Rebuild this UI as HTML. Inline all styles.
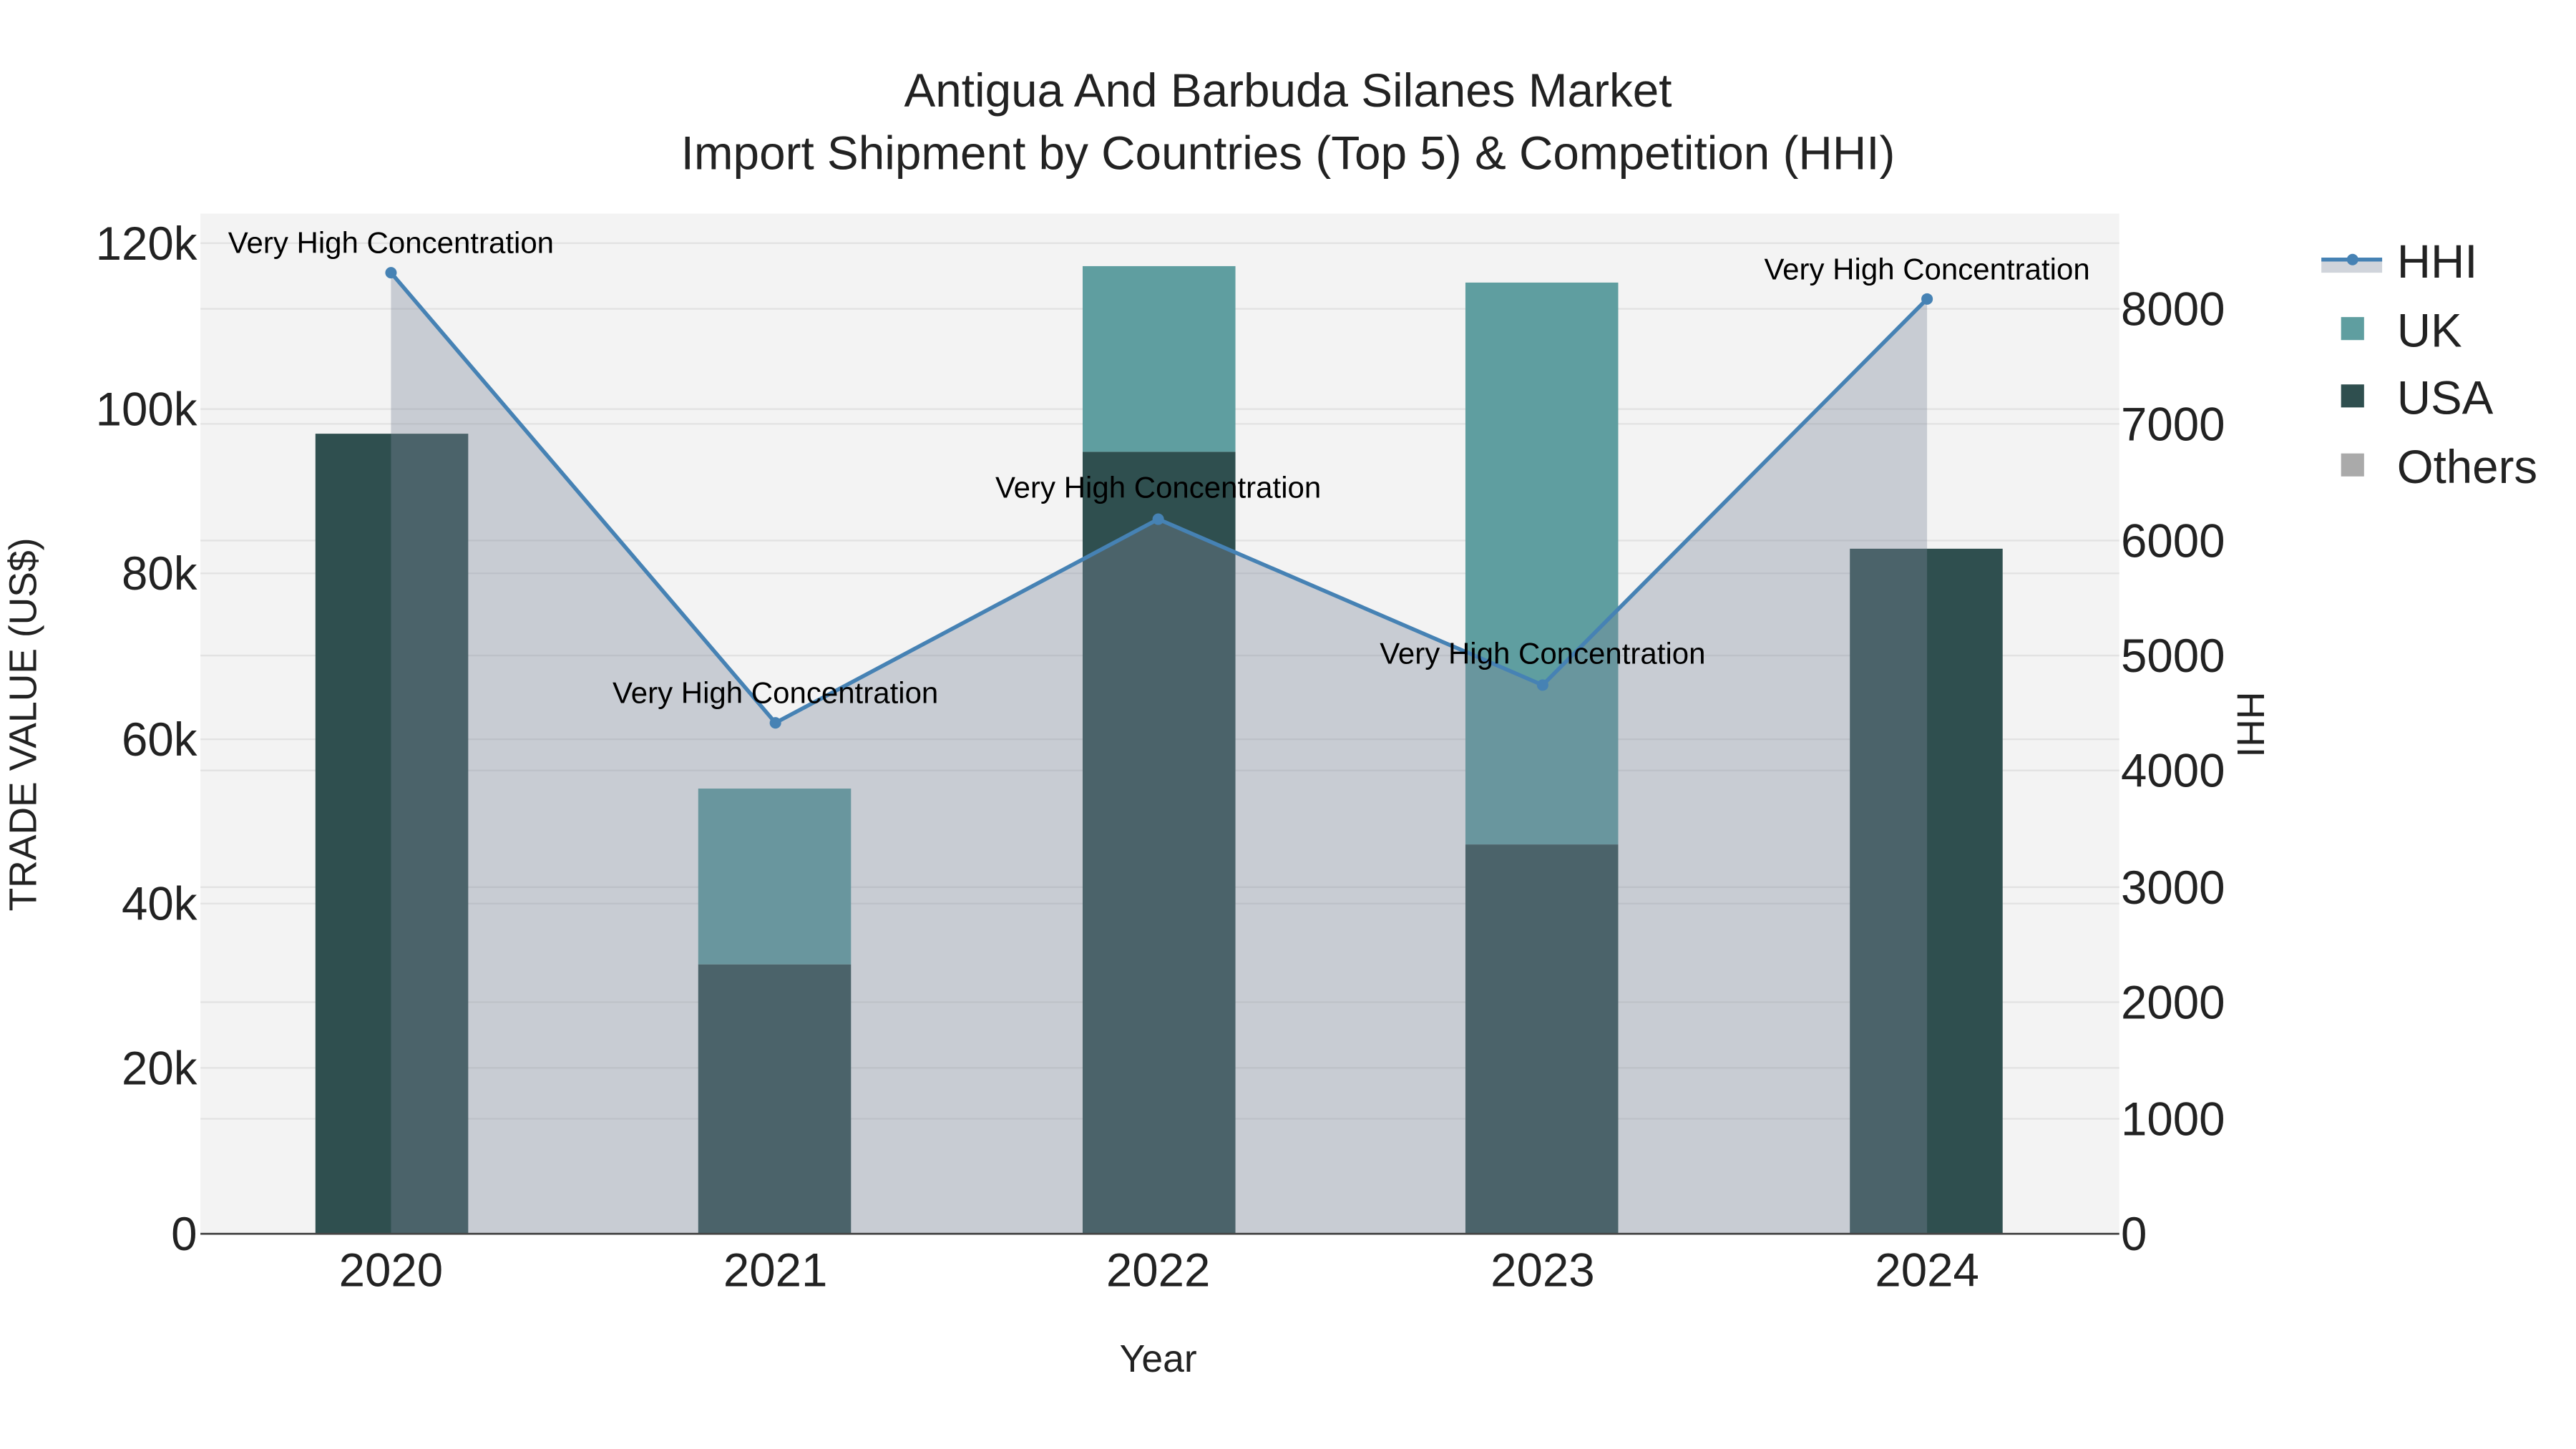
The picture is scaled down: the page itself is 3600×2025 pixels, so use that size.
<!DOCTYPE html>
<html><head><meta charset="utf-8"><style>html,body{margin:0;padding:0;background:#fff}svg{display:block}</style></head>
<body>
<svg width="3600" height="2025" viewBox="0 0 1568 882" xmlns="http://www.w3.org/2000/svg" font-family="Liberation Sans, sans-serif">
<rect width="1568" height="882" fill="#fff"/>
<rect x="122" y="130" width="1168" height="621" fill="#f3f3f3"/>
<g stroke="#e2e2e2" stroke-width="1">
<line x1="122" x2="1290" y1="148" y2="148"/><line x1="122" x2="1290" y1="249" y2="249"/><line x1="122" x2="1290" y1="349" y2="349"/><line x1="122" x2="1290" y1="450" y2="450"/><line x1="122" x2="1290" y1="550" y2="550"/><line x1="122" x2="1290" y1="650" y2="650"/>
<line x1="122" x2="1290" y1="188" y2="188"/><line x1="122" x2="1290" y1="258" y2="258"/><line x1="122" x2="1290" y1="329" y2="329"/><line x1="122" x2="1290" y1="399" y2="399"/><line x1="122" x2="1290" y1="469" y2="469"/><line x1="122" x2="1290" y1="540" y2="540"/><line x1="122" x2="1290" y1="610" y2="610"/><line x1="122" x2="1290" y1="681" y2="681"/>
</g>
<rect x="192" y="264" width="93" height="487" fill="#2f4f4f"/>
<rect x="425" y="587" width="93" height="164" fill="#2f4f4f"/>
<rect x="425" y="480" width="93" height="107" fill="#5f9ea0"/>
<rect x="659" y="275" width="93" height="476" fill="#2f4f4f"/>
<rect x="659" y="162" width="93" height="113" fill="#5f9ea0"/>
<rect x="892" y="514" width="93" height="237" fill="#2f4f4f"/>
<rect x="892" y="172" width="93" height="342" fill="#5f9ea0"/>
<rect x="1126" y="334" width="93" height="417" fill="#2f4f4f"/>
<path d="M238,166 L472,440 L705,316 L939,417 L1173,182 L1173,751 L238,751 Z" fill="rgba(125,136,155,0.36)"/>
<polyline points="238,166 472,440 705,316 939,417 1173,182" fill="none" stroke="#4682b4" stroke-width="2.4"/>
<g fill="#4682b4"><circle cx="238" cy="166" r="3.5"/><circle cx="472" cy="440" r="3.5"/><circle cx="705" cy="316" r="3.5"/><circle cx="939" cy="417" r="3.5"/><circle cx="1173" cy="182" r="3.5"/></g>
<line x1="122" x2="1290" y1="751" y2="751" stroke="#444" stroke-width="1.2"/>
<g font-size="18.3" fill="#000" text-anchor="middle">
<text x="238" y="154">Very High Concentration</text>
<text x="472" y="428">Very High Concentration</text>
<text x="705" y="303">Very High Concentration</text>
<text x="939" y="404">Very High Concentration</text>
<text x="1173" y="170">Very High Concentration</text>
</g>
<g font-size="28.6" fill="#222" text-anchor="middle">
<text x="784" y="65">Antigua And Barbuda Silanes Market</text>
<text x="784" y="103">Import Shipment by Countries (Top 5) &amp; Competition (HHI)</text>
</g>
<g font-size="28.5" fill="#222" text-anchor="end">
<text x="120" y="158">120k</text><text x="120" y="259">100k</text><text x="120" y="359">80k</text><text x="120" y="460">60k</text><text x="120" y="560">40k</text><text x="120" y="660">20k</text><text x="120" y="761">0</text>
</g>
<g font-size="28.5" fill="#222" text-anchor="start">
<text x="1291" y="198">8000</text><text x="1291" y="268">7000</text><text x="1291" y="339">6000</text><text x="1291" y="409">5000</text><text x="1291" y="479">4000</text><text x="1291" y="550">3000</text><text x="1291" y="620">2000</text><text x="1291" y="691">1000</text><text x="1291" y="761">0</text>
</g>
<g font-size="28.5" fill="#222" text-anchor="middle">
<text x="238" y="783">2020</text><text x="472" y="783">2021</text><text x="705" y="783">2022</text><text x="939" y="783">2023</text><text x="1173" y="783">2024</text>
</g>
<text x="705" y="835" font-size="23.3" fill="#222" text-anchor="middle">Year</text>
<text transform="translate(22,441) rotate(-90)" font-size="23.3" fill="#222" text-anchor="middle">TRADE VALUE (US$)</text>
<text transform="translate(1362,441) rotate(90)" font-size="23.3" fill="#222" text-anchor="middle">HHI</text>
<rect x="1413" y="158" width="37" height="8" fill="rgba(125,136,155,0.36)"/>
<line x1="1413" x2="1450" y1="158" y2="158" stroke="#4682b4" stroke-width="2.4"/>
<circle cx="1432" cy="158" r="3.5" fill="#4682b4"/>
<rect x="1425" y="193" width="14" height="14" fill="#5f9ea0"/>
<rect x="1425" y="234" width="14" height="14" fill="#2f4f4f"/>
<rect x="1425" y="276" width="14" height="14" fill="#aaaaaa"/>
<g font-size="28.5" fill="#222">
<text x="1459" y="169">HHI</text><text x="1459" y="211">UK</text><text x="1459" y="252">USA</text><text x="1459" y="294">Others</text>
</g>
</svg>
</body></html>
